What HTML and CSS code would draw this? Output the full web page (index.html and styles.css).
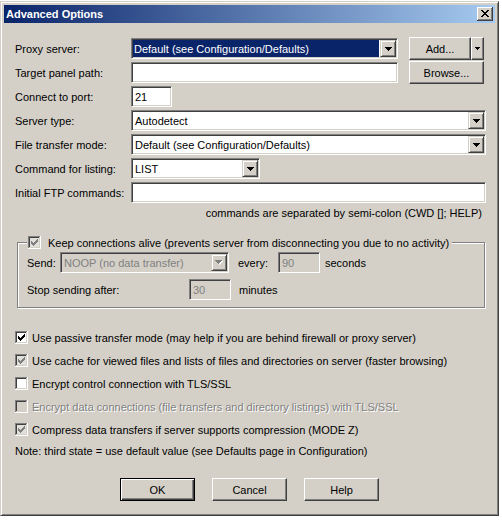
FILE: index.html
```html
<!DOCTYPE html>
<html>
<head>
<meta charset="utf-8">
<title>Advanced Options</title>
<link rel="stylesheet" href="styles.css">
</head>
<body>
<div class="dialog">
  <div class="titlebar">
    <span class="title">Advanced Options</span>
    <svg class="close" width="16" height="14" viewBox="0 0 16 14" shape-rendering="crispEdges">
      <rect width="16" height="14" fill="#404040"/>
      <rect width="15" height="13" fill="#fff"/>
      <rect x="1" y="1" width="14" height="12" fill="#808080"/>
      <rect x="1" y="1" width="13" height="11" fill="#d4d0c8"/>
      <path fill="#000" d="M4 3h2v1H4zM10 3h2v1h-2zM5 4h2v1H5zM9 4h2v1H9zM6 5h4v1H6zM7 6h2v1H7zM6 7h4v1H6zM5 8h2v1H5zM9 8h2v1H9zM4 9h2v1H4zM10 9h2v1h-2z"/>
    </svg>
  </div>
  <div class="content">
    <div class="row">
      <span class="lbl">Proxy server:</span>
      <div class="field w-mid">
        <span class="val selected">Default (see Configuration/Defaults)</span>
        <span class="dd"><svg width="7" height="4" viewBox="0 0 7 4" shape-rendering="crispEdges"><path d="M0 0h7v1H0zM1 1h5v1H1zM2 2h3v1H2zM3 3h1v1H3z"/></svg></span>
      </div>
      <div class="split">
        <span class="btn split-main">Add...</span>
        <span class="btn split-arrow"><svg width="5" height="3" viewBox="0 0 5 3" shape-rendering="crispEdges"><path d="M0 0h5v1H0zM1 1h3v1H1zM2 2h1v1H2z"/></svg></span>
      </div>
    </div>
    <div class="row">
      <span class="lbl">Target panel path:</span>
      <div class="field w-mid"></div>
      <span class="btn side-btn">Browse...</span>
    </div>
    <div class="row">
      <span class="lbl">Connect to port:</span>
      <div class="field w-port"><span class="val">21</span></div>
    </div>
    <div class="row">
      <span class="lbl">Server type:</span>
      <div class="field w-full">
        <span class="val">Autodetect</span>
        <span class="dd"><svg width="7" height="4" viewBox="0 0 7 4" shape-rendering="crispEdges"><path d="M0 0h7v1H0zM1 1h5v1H1zM2 2h3v1H2zM3 3h1v1H3z"/></svg></span>
      </div>
    </div>
    <div class="row">
      <span class="lbl">File transfer mode:</span>
      <div class="field w-full">
        <span class="val">Default (see Configuration/Defaults)</span>
        <span class="dd"><svg width="7" height="4" viewBox="0 0 7 4" shape-rendering="crispEdges"><path d="M0 0h7v1H0zM1 1h5v1H1zM2 2h3v1H2zM3 3h1v1H3z"/></svg></span>
      </div>
    </div>
    <div class="row">
      <span class="lbl">Command for listing:</span>
      <div class="field w-list">
        <span class="val">LIST</span>
        <span class="dd"><svg width="7" height="4" viewBox="0 0 7 4" shape-rendering="crispEdges"><path d="M0 0h7v1H0zM1 1h5v1H1zM2 2h3v1H2zM3 3h1v1H3z"/></svg></span>
      </div>
    </div>
    <div class="row">
      <span class="lbl">Initial FTP commands:</span>
      <div class="field w-full"></div>
    </div>
    <div class="hint">commands are separated by semi-colon (CWD []; HELP)</div>

    <div class="group">
      <div class="legend">
        <svg class="cb" width="13" height="13" viewBox="0 0 13 13" shape-rendering="crispEdges">
          <rect width="13" height="13" fill="#fff"/>
          <path d="M0 0h12v1H1v11H0z" fill="#808080"/>
          <path d="M1 1h10v1H2v9H1z" fill="#404040"/>
          <path d="M11 1h1v11H1v-1h10z" fill="#d4d0c8"/>
          <rect x="2" y="2" width="9" height="9" fill="#e2e0db"/>
          <path fill="#808080" d="M3 5h1v3h-1zM4 6h1v3h-1zM5 7h1v3h-1zM6 6h1v3h-1zM7 5h1v3h-1zM8 4h1v3h-1zM9 3h1v3h-1z"/>
        </svg>
        <span class="legend-text">Keep connections alive (prevents server from disconnecting you due to no activity)</span>
      </div>
      <div class="grow send-row">
        <span class="g-lbl-send">Send:</span>
        <div class="field disabled w-noop">
          <span class="val">NOOP (no data transfer)</span>
          <span class="dd"><svg width="8" height="5" viewBox="0 0 8 5" shape-rendering="crispEdges"><path fill="#fff" d="M1 1h7v1H1zM2 2h5v1H2zM3 3h3v1H3zM4 4h1v1H4z"/><path fill="#808080" d="M0 0h7v1H0zM1 1h5v1H1zM2 2h3v1H2zM3 3h1v1H3z"/></svg></span>
        </div>
        <span class="g-lbl-every">every:</span>
        <div class="field disabled w-num"><span class="val">90</span></div>
        <span class="unit">seconds</span>
      </div>
      <div class="grow stop-row">
        <span class="g-lbl-stop">Stop sending after:</span>
        <div class="field disabled w-num"><span class="val">30</span></div>
        <span class="unit unit-min">minutes</span>
      </div>
    </div>

    <div class="checks">
      <div class="check-row">
        <svg class="cb" width="13" height="13" viewBox="0 0 13 13" shape-rendering="crispEdges">
          <rect width="13" height="13" fill="#fff"/>
          <path d="M0 0h12v1H1v11H0z" fill="#808080"/>
          <path d="M1 1h10v1H2v9H1z" fill="#404040"/>
          <path d="M11 1h1v11H1v-1h10z" fill="#d4d0c8"/>
          <rect x="2" y="2" width="9" height="9" fill="#fff"/>
          <path fill="#000" d="M3 5h1v3h-1zM4 6h1v3h-1zM5 7h1v3h-1zM6 6h1v3h-1zM7 5h1v3h-1zM8 4h1v3h-1zM9 3h1v3h-1z"/>
        </svg>
        <span class="cb-text">Use passive transfer mode (may help if you are behind firewall or proxy server)</span>
      </div>
      <div class="check-row">
        <svg class="cb" width="13" height="13" viewBox="0 0 13 13" shape-rendering="crispEdges">
          <rect width="13" height="13" fill="#fff"/>
          <path d="M0 0h12v1H1v11H0z" fill="#808080"/>
          <path d="M1 1h10v1H2v9H1z" fill="#404040"/>
          <path d="M11 1h1v11H1v-1h10z" fill="#d4d0c8"/>
          <rect x="2" y="2" width="9" height="9" fill="#e2e0db"/>
          <path fill="#808080" d="M3 5h1v3h-1zM4 6h1v3h-1zM5 7h1v3h-1zM6 6h1v3h-1zM7 5h1v3h-1zM8 4h1v3h-1zM9 3h1v3h-1z"/>
        </svg>
        <span class="cb-text">Use cache for viewed files and lists of files and directories on server (faster browsing)</span>
      </div>
      <div class="check-row">
        <svg class="cb" width="13" height="13" viewBox="0 0 13 13" shape-rendering="crispEdges">
          <rect width="13" height="13" fill="#fff"/>
          <path d="M0 0h12v1H1v11H0z" fill="#808080"/>
          <path d="M1 1h10v1H2v9H1z" fill="#404040"/>
          <path d="M11 1h1v11H1v-1h10z" fill="#d4d0c8"/>
          <rect x="2" y="2" width="9" height="9" fill="#fff"/>
        </svg>
        <span class="cb-text">Encrypt control connection with TLS/SSL</span>
      </div>
      <div class="check-row">
        <svg class="cb" width="13" height="13" viewBox="0 0 13 13" shape-rendering="crispEdges">
          <rect width="13" height="13" fill="#fff"/>
          <path d="M0 0h12v1H1v11H0z" fill="#808080"/>
          <path d="M1 1h10v1H2v9H1z" fill="#404040"/>
          <path d="M11 1h1v11H1v-1h10z" fill="#d4d0c8"/>
          <rect x="2" y="2" width="9" height="9" fill="#d4d0c8"/>
        </svg>
        <span class="cb-text disabled-text">Encrypt data connections (file transfers and directory listings) with TLS/SSL</span>
      </div>
      <div class="check-row">
        <svg class="cb" width="13" height="13" viewBox="0 0 13 13" shape-rendering="crispEdges">
          <rect width="13" height="13" fill="#fff"/>
          <path d="M0 0h12v1H1v11H0z" fill="#808080"/>
          <path d="M1 1h10v1H2v9H1z" fill="#404040"/>
          <path d="M11 1h1v11H1v-1h10z" fill="#d4d0c8"/>
          <rect x="2" y="2" width="9" height="9" fill="#e2e0db"/>
          <path fill="#808080" d="M3 5h1v3h-1zM4 6h1v3h-1zM5 7h1v3h-1zM6 6h1v3h-1zM7 5h1v3h-1zM8 4h1v3h-1zM9 3h1v3h-1z"/>
        </svg>
        <span class="cb-text">Compress data transfers if server supports compression (MODE Z)</span>
      </div>
    </div>
    <div class="note">Note: third state = use default value (see Defaults page in Configuration)</div>

    <div class="buttons">
      <span class="btn default">OK</span>
      <span class="btn">Cancel</span>
      <span class="btn">Help</span>
    </div>
  </div>
</div>
</body>
</html>
```

FILE: styles.css
```css
* { box-sizing: border-box; }
html, body { margin: 0; padding: 0; background: #fff; }
body {
  font-family: "Liberation Sans", Arial, sans-serif;
  font-size: 11px;
  color: #000;
}

.dialog {
  width: 499px;
  height: 515px;
  margin-top: 1px;
  background: #d4d0c8;
  border: 1px solid;
  border-color: #d4d0c8 #404040 #404040 #d4d0c8;
  box-shadow: inset 1px 1px 0 #fff, inset -1px -1px 0 #808080;
  padding: 3px;
}

.titlebar {
  height: 18px;
  display: flex;
  align-items: center;
  padding-left: 2px;
  background: linear-gradient(to right, #0a246a, #a6caf0);
}
.title {
  color: #fff;
  font-weight: bold;
  font-size: 11px;
}
.close {
  margin-left: auto;
  margin-right: 2px;
  display: block;
}

.content {
  padding: 15px 11px 0 11px;
}

.row {
  display: flex;
  align-items: center;
  height: 21px;
  margin-bottom: 3px;
}
.lbl { width: 116px; flex: none; white-space: nowrap; }

.field {
  flex: none;
  height: 21px;
  background: #fff;
  border: 1px solid;
  border-color: #808080 #fff #fff #808080;
  box-shadow: inset 1px 1px 0 #404040, inset -1px -1px 0 #d4d0c8;
  padding: 1px;
  display: flex;
  align-items: center;
  white-space: nowrap;
  overflow: hidden;
}
.field.disabled { background: #d4d0c8; color: #808080; }
.w-mid { width: 267px; }
.w-full { width: 355px; }
.w-port { width: 41px; }
.w-list { width: 129px; }
.w-noop { width: 169px; }
.w-num { width: 42px; }

.val {
  flex: 1;
  height: 100%;
  display: flex;
  align-items: center;
  padding-left: 2px;
  overflow: hidden;
}
.val.selected {
  background: #0a246a;
  color: #fff;
  margin-right: 1px;
  padding-left: 1px;
}

.dd {
  flex: none;
  width: 16px;
  height: 100%;
  margin-left: auto;
  background: #d4d0c8;
  border: 1px solid;
  border-color: #d4d0c8 #404040 #404040 #d4d0c8;
  box-shadow: inset 1px 1px 0 #fff, inset -1px -1px 0 #808080;
  display: flex;
  align-items: center;
  justify-content: center;
}
.dd svg { display: block; }

.btn {
  flex: none;
  width: 75px;
  height: 23px;
  background: #d4d0c8;
  border: 1px solid;
  border-color: #fff #404040 #404040 #fff;
  box-shadow: inset -1px -1px 0 #808080;
  display: flex;
  align-items: center;
  justify-content: center;
  white-space: nowrap;
}
.btn.default {
  border-color: #000;
  box-shadow: inset 1px 1px 0 #fff, inset -1px -1px 0 #404040, inset -2px -2px 0 #808080;
}
.side-btn { margin-left: 11px; }

.split { display: flex; margin-left: 11px; }
.split-main { width: 62px; }
.split-arrow { width: 13px; }
.split-arrow svg { display: block; }

.hint {
  height: 14px;
  line-height: 14px;
  text-align: right;
  padding-right: 2px;
}

.group {
  margin: 22px 0 0 2px;
  width: 468px;
  height: 66px;
  border: 1px solid #808080;
  box-shadow: inset 1px 1px 0 #fff, 1px 1px 0 #fff;
}
.legend {
  display: flex;
  align-items: center;
  width: fit-content;
  height: 15px;
  margin: -8px 0 0 9px;
  padding: 0 3px 0 1px;
  background: #d4d0c8;
}
.cb { display: block; flex: none; }
.legend-text { margin-left: 7px; white-space: nowrap; }

.grow {
  display: flex;
  align-items: center;
  height: 21px;
  padding-left: 9px;
  white-space: nowrap;
}
.send-row { margin-top: 2px; }
.stop-row { margin-top: 6px; }
.g-lbl-send { width: 33px; flex: none; }
.g-lbl-every { width: 40px; flex: none; margin-left: 9px; }
.g-lbl-stop { width: 162px; flex: none; }
.unit { margin-left: 5px; }
.unit-min { margin-left: 8px; }

.checks { margin-top: 18px; }
.check-row {
  display: flex;
  align-items: center;
  height: 23px;
  white-space: nowrap;
}
.cb-text { margin-left: 4px; }
.disabled-text { color: #808080; text-shadow: 1px 1px 0 #fff; }

.note {
  height: 20px;
  display: flex;
  align-items: center;
  white-space: nowrap;
}

.buttons {
  display: flex;
  justify-content: center;
  gap: 17px;
  margin-top: 17px;
}
```
